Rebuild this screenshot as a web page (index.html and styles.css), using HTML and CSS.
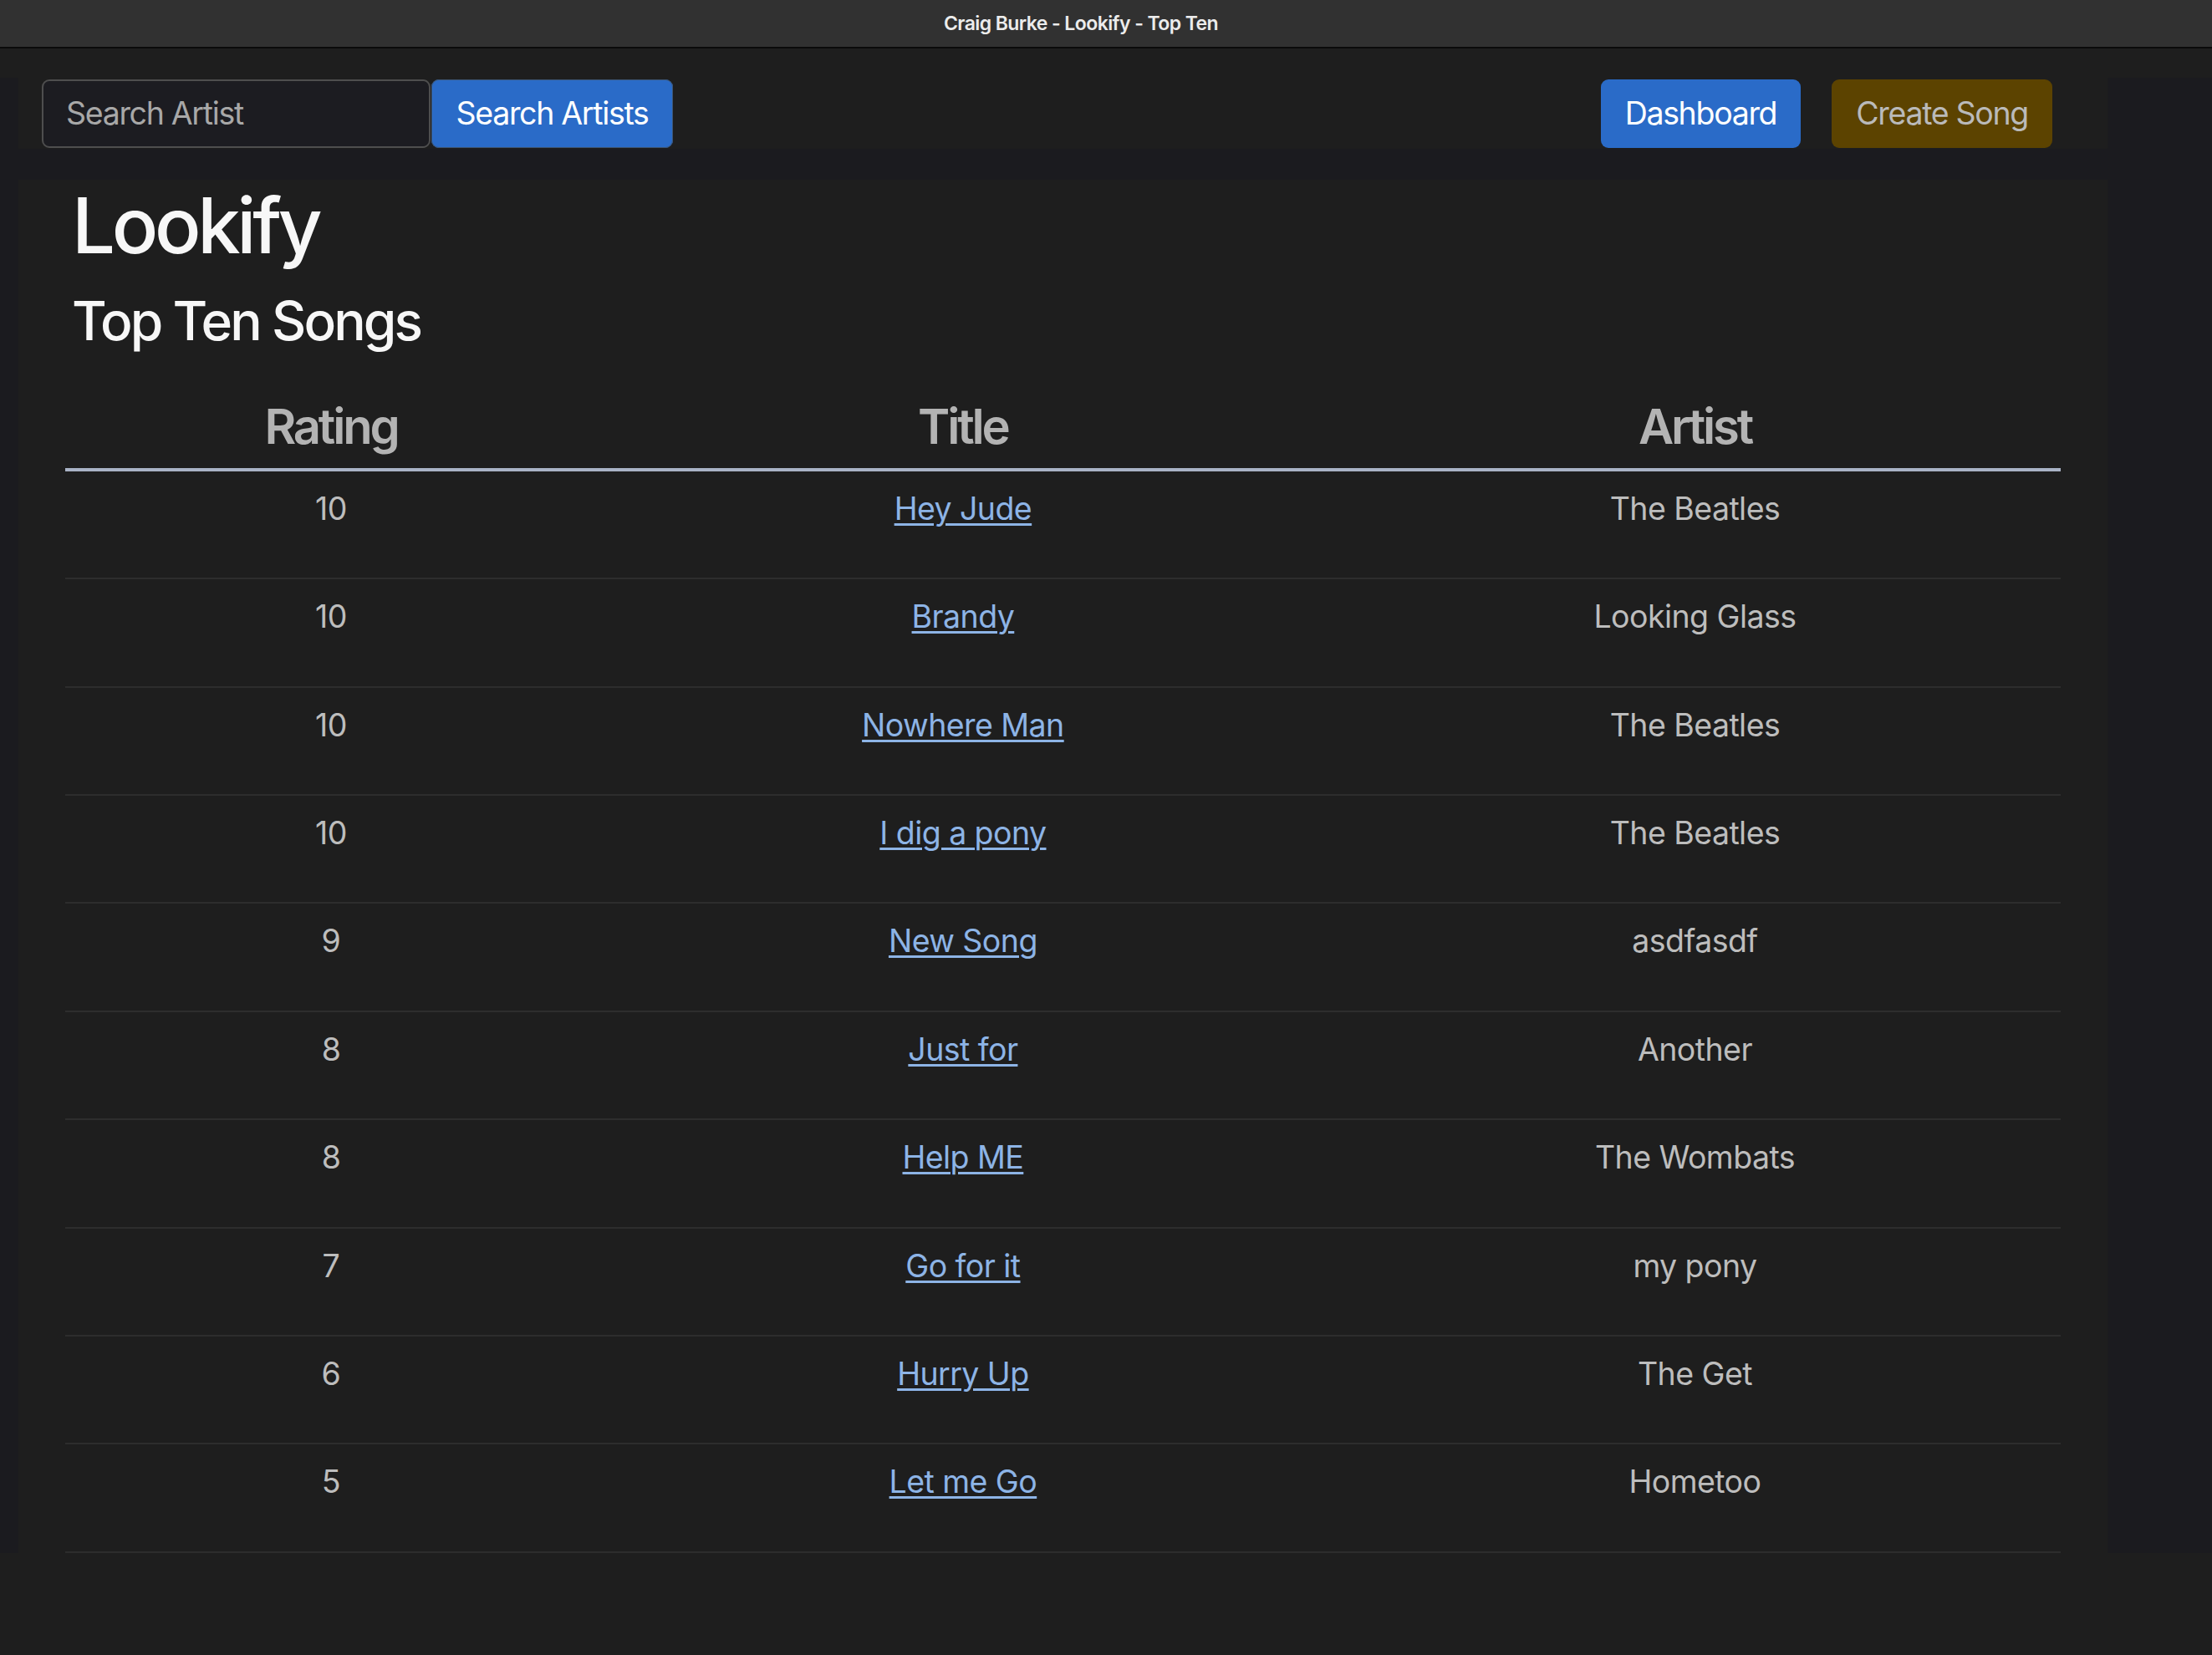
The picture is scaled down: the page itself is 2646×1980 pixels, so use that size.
FILE: index.html
```html
<!DOCTYPE html>
<html lang="en">
<head>
<meta charset="utf-8">
<title>Craig Burke - Lookify - Top Ten</title>
<link rel="stylesheet" href="styles.css">
</head>
<body>
<header class="titlebar">Craig Burke - Lookify - Top Ten</header>
<div class="page">
  <div class="shell">
    <nav class="nav">
      <form class="search">
        <input class="search-input" type="text" placeholder="Search Artist">
        <button class="btn btn-primary" type="button">Search Artists</button>
      </form>
      <div class="nav-actions">
        <a class="btn btn-primary" href="#">Dashboard</a>
        <a class="btn btn-warning" href="#">Create Song</a>
      </div>
    </nav>
    <main class="main">
      <h1 class="brand">Lookify</h1>
      <h3 class="subtitle">Top Ten Songs</h3>
      <table class="songs">
        <colgroup>
          <col class="col-rating">
          <col class="col-title">
          <col class="col-artist">
        </colgroup>
        <thead>
          <tr><th>Rating</th><th>Title</th><th>Artist</th></tr>
        </thead>
        <tbody>
          <tr><td>10</td><td><a href="#">Hey Jude</a></td><td>The Beatles</td></tr>
          <tr><td>10</td><td><a href="#">Brandy</a></td><td>Looking Glass</td></tr>
          <tr><td>10</td><td><a href="#">Nowhere Man</a></td><td>The Beatles</td></tr>
          <tr><td>10</td><td><a href="#">I dig a pony</a></td><td>The Beatles</td></tr>
          <tr><td>9</td><td><a href="#">New Song</a></td><td>asdfasdf</td></tr>
          <tr><td>8</td><td><a href="#">Just for</a></td><td>Another</td></tr>
          <tr><td>8</td><td><a href="#">Help ME</a></td><td>The Wombats</td></tr>
          <tr><td>7</td><td><a href="#">Go for it</a></td><td>my pony</td></tr>
          <tr><td>6</td><td><a href="#">Hurry Up</a></td><td>The Get</td></tr>
          <tr><td>5</td><td><a href="#">Let me Go</a></td><td>Hometoo</td></tr>
        </tbody>
      </table>
    </main>
  </div>
</div>
</body>
</html>
```

FILE: styles.css
```css
* { box-sizing: border-box; }

html, body {
  margin: 0;
  padding: 0;
  background: #1e1e1e;
  min-height: 100%;
}

body {
  font-family: "Inter", "Noto Sans", sans-serif;
  color: #bdbdbd;
  letter-spacing: -0.035em;
}

.titlebar {
  height: 58px;
  background: #313131;
  border-bottom: 2px solid #0b0b0b;
  display: flex;
  align-items: center;
  justify-content: center;
  padding-right: 60px;
  color: #ececec;
  font-size: 23px;
  font-weight: 600;
  letter-spacing: -0.025em;
}

.page {
  padding-top: 35px;
  padding-bottom: 123px;
}

.shell {
  background: #1b1b1f;
  padding: 0 125px 0 22px;
}

.nav {
  height: 85px;
  background: #1e1e1e;
  display: flex;
  align-items: center;
  justify-content: space-between;
  padding: 0 66px 0 28px;
}

.search {
  display: flex;
  gap: 1px;
  margin: 0;
}

.search-input {
  width: 465px;
  height: 82px;
  background: #1c1c21;
  border: 2px solid #4e4e4e;
  border-radius: 9px;
  padding: 0 0 0 27px;
  font-family: inherit;
  font-size: 37.5px;
  letter-spacing: -0.035em;
  color: #bdbdbd;
  outline: none;
}

.search-input::placeholder {
  color: #a8a8a8;
}

.nav-actions {
  display: flex;
  gap: 37px;
}

.btn {
  height: 82px;
  display: inline-flex;
  align-items: center;
  justify-content: center;
  padding: 0 29px;
  border-radius: 9px;
  font-family: inherit;
  font-size: 37.5px;
  letter-spacing: -0.035em;
  white-space: nowrap;
  text-decoration: none;
  border: 0;
  cursor: pointer;
}

.btn-primary {
  background: #2a6bc8;
  color: #ffffff;
}

.search .btn-primary {
  width: 289px;
  padding: 0;
  box-shadow: inset 0 0 0 1px #3d5675;
}

.btn-warning {
  background: #5c4300;
  color: #bababa;
}

.main {
  margin-top: 37px;
  background: #1e1e1e;
  padding: 0 56px;
}

.brand {
  margin: 0;
  padding: 0 0 0 8px;
  font-size: 92px;
  line-height: 1.2;
  font-weight: 500;
  color: #f7f7f7;
  letter-spacing: -0.047em;
}

.subtitle {
  margin: 21px 0 34px;
  padding: 0 0 0 8px;
  font-size: 64px;
  line-height: 1.2;
  font-weight: 500;
  color: #f7f7f7;
  letter-spacing: -0.045em;
}

.songs {
  width: 100%;
  border-collapse: collapse;
  table-layout: fixed;
  margin: 0;
}

.col-rating { width: 26.64%; }
.col-title { width: 36.7%; }
.col-artist { width: 36.66%; }

.songs th {
  font-size: 58px;
  font-weight: 600;
  line-height: 1.2;
  color: #b3b3b3;
  text-align: center;
  letter-spacing: -0.055em;
  padding: 19px 19px 14px;
  border-bottom: 4px solid #a9b3c6;
}

.songs td {
  font-size: 37.5px;
  line-height: 56px;
  text-align: center;
  padding: 17px 19px 54.4px;
  border-bottom: 2px solid #2d2d2d;
  color: #bdbdbd;
}

.songs a {
  color: #8db4e6;
  text-decoration: underline;
  text-decoration-thickness: 2.5px;
  text-underline-offset: 4px;
}
```
